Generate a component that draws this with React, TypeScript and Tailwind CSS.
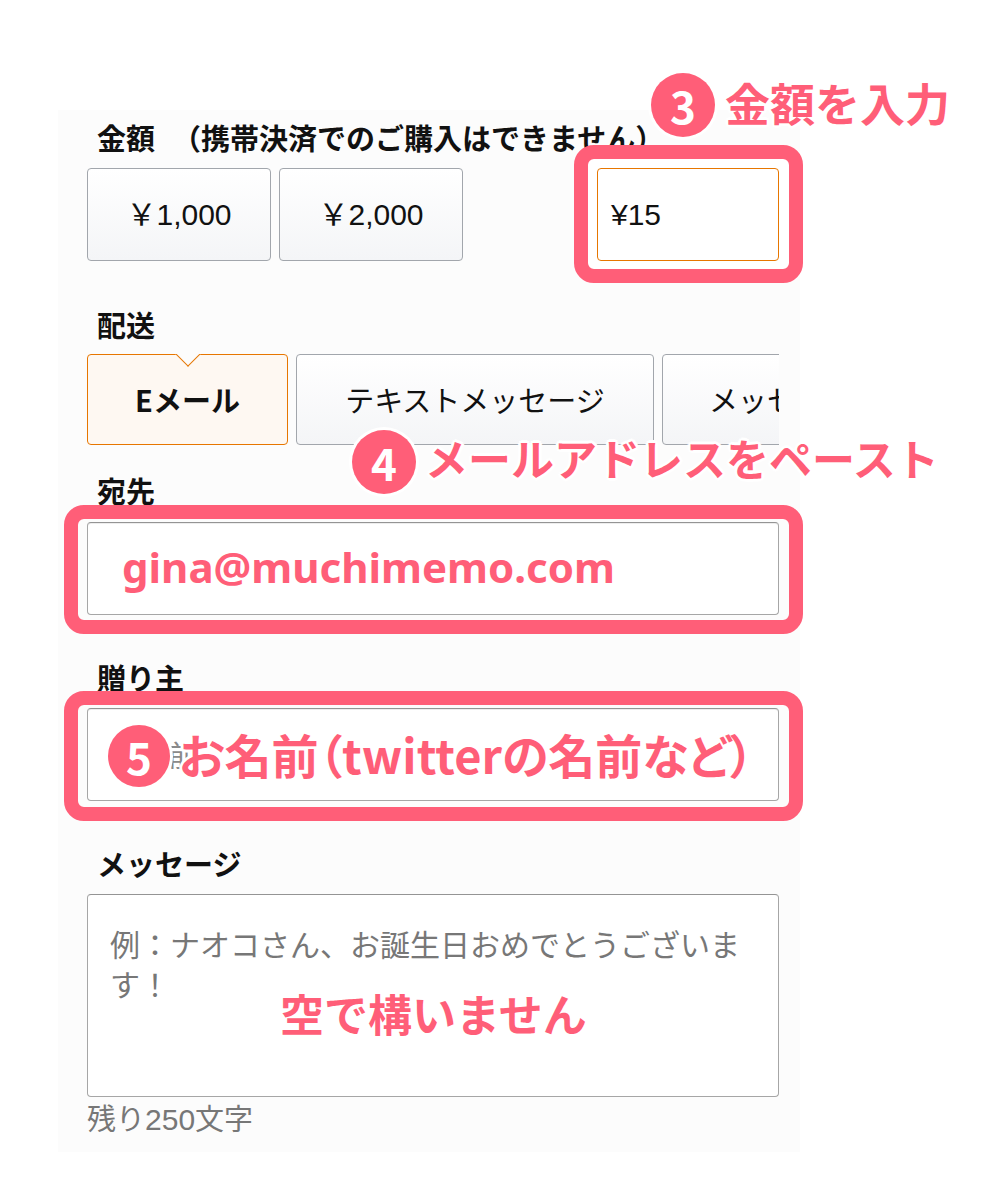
const PINK = 'text-[#ff5e78]';
const NUM_FONT = { fontFamily: '"Liberation Sans", "Noto Sans CJK JP", sans-serif' };

const Badge = ({ n, className }: { n: string; className: string }) => (
  <div
    className={`absolute flex items-center justify-center rounded-full bg-[#ff5e78] text-white font-bold text-[44px] leading-none shadow-[0_0_0_3px_#fff] ${className}`}
  >
    {n}
  </div>
);

const halo =
  '[text-shadow:3px_0_0_#fff,-3px_0_0_#fff,0_3px_0_#fff,0_-3px_0_#fff,2px_2px_0_#fff,-2px_-2px_0_#fff,2px_-2px_0_#fff,-2px_2px_0_#fff]';

const Label = ({ children, className = '' }: { children: React.ReactNode; className?: string }) => (
  <div className={`pl-[10px] text-[29px] leading-[35px] font-bold text-[#111] ${className}`}>{children}</div>
);

const PinkFrame = ({ className }: { className: string }) => (
  <div className={`absolute border-[14px] border-[#ff5e78] rounded-[20px] pointer-events-none ${className}`} />
);

const tabBase =
  'shrink-0 h-[91px] rounded-[4px] flex items-center justify-center whitespace-nowrap text-[29px] text-[#111]';

export default function App() {
  return (
    <div
      className="relative w-[1000px] h-[1200px] bg-white overflow-hidden"
      style={{ fontFamily: '"Noto Sans CJK JP", "Noto Sans", sans-serif' }}
    >
      <div className="ml-[58px] mt-[110px] w-[742px] bg-[#fcfcfc] pl-[29px] pt-[10px] pb-[15px]">
        <div className="w-[692px]">
          {/* 金額 */}
          <Label>
            金額<span className="ml-[17px]">（携帯決済でのご購入はできません）</span>
          </Label>
          <div className="mt-[13px] flex items-center gap-[8px]">
            <button
              className="w-[184px] h-[93px] rounded-[4px] border border-[#a2a6ac] bg-linear-to-b from-white to-[#f4f5f7] text-[30px] text-[#111]"
              style={NUM_FONT}
            >
              ￥1,000
            </button>
            <button
              className="w-[184px] h-[93px] rounded-[4px] border border-[#a2a6ac] bg-linear-to-b from-white to-[#f4f5f7] text-[30px] text-[#111]"
              style={NUM_FONT}
            >
              ￥2,000
            </button>
            <div className="relative ml-auto w-[182px] h-[93px]">
              <PinkFrame className="-left-[23px] -top-[23px] -right-[24px] -bottom-[22px] bg-white" />
              <div
                className="relative h-full rounded-[4px] border-[1.5px] border-[#e77600] bg-white flex items-center pl-[13px] text-[30px] text-[#111]"
                style={NUM_FONT}
              >
                ¥15
              </div>
            </div>
          </div>

          {/* 配送 */}
          <Label className="mt-[46px]">配送</Label>
          <div className="mt-[12px] flex gap-[8px] overflow-hidden">
            <div className={`${tabBase} relative w-[201px] border-[1.5px] border-[#e77600] bg-[#fef8f2] font-bold`}>
              Eメール
              <span className="absolute left-1/2 -top-[10px] -ml-[9px] w-[18px] h-[18px] rotate-45 bg-[#fcfcfc] border-r-[1.5px] border-b-[1.5px] border-[#e77600]" />
            </div>
            <div className={`${tabBase} w-[358px] border border-[#a2a6ac] bg-linear-to-b from-white to-[#f4f5f7]`}>
              テキストメッセージ
            </div>
            <div
              className={`${tabBase} w-[300px] justify-start pl-[46px] border border-[#a2a6ac] bg-linear-to-b from-white to-[#f4f5f7]`}
            >
              メッセージカード
            </div>
          </div>

          {/* 宛先 */}
          <Label className="mt-[28px]">宛先</Label>
          <div className="relative mt-[14px] h-[93px]">
            <PinkFrame className="-left-[23px] -top-[17px] -right-[24px] -bottom-[19px]" />
            <div className="h-full rounded-[4px] border border-[#a6a6a6] border-t-[#949494] bg-white shadow-[0_1px_0_rgba(0,0,0,0.07)_inset]" />
          </div>

          {/* 贈り主 */}
          <Label className="mt-[45px]">贈り主</Label>
          <div className="relative mt-[13px] h-[93px]">
            <PinkFrame className="-left-[23px] -top-[17px] -right-[24px] -bottom-[20px]" />
            <div className="h-full rounded-[4px] border border-[#a6a6a6] border-t-[#949494] bg-white flex items-center pl-[22px] text-[29px] text-[#8a8a8a] shadow-[0_1px_0_rgba(0,0,0,0.07)_inset]">
              お名前
            </div>
          </div>

          {/* メッセージ */}
          <Label className="mt-[45px]">メッセージ</Label>
          <div className="mt-[13px] h-[203px] rounded-[4px] border border-[#a6a6a6] border-t-[#949494] bg-white pl-[22px] pt-[28px] text-[30px] leading-[40px] text-[#777]">
            例：ナオコさん、お誕生日おめでとうございま
            <br />
            す！
          </div>
          <div className="mt-[3px] text-[29px] leading-[35px] text-[#777]">
            残り<span style={NUM_FONT} className="text-[30px]">250</span>文字
          </div>
        </div>
      </div>

      {/* annotations */}
      <Badge n="3" className="left-[651px] top-[73px] w-[64px] h-[64px]" />
      <div className={`absolute left-[725px] top-[80px] text-[45px] leading-none font-bold ${PINK} ${halo}`}>
        金額を入力
      </div>

      <Badge n="4" className="left-[352px] top-[430px] w-[64px] h-[64px]" />
      <div className={`absolute left-[425px] top-[436px] text-[43px] leading-none font-bold ${PINK} ${halo}`}>
        メールアドレスをペースト
      </div>

      <div
        className={`absolute left-[122px] top-[546px] text-[42px] leading-none font-bold ${PINK}`}
        style={{ fontFamily: '"Noto Sans", "Open Sans", sans-serif' }}
      >
        gina@muchimemo.com
      </div>

      <Badge n="5" className="left-[108px] top-[725px] w-[62px] h-[62px]" />
      <div
        className={`absolute left-[179px] top-[730px] text-[47px] leading-none font-bold ${PINK} ${halo} [font-feature-settings:'palt']`}
      >
        お名前（twitterの名前など）
      </div>

      <div className={`absolute left-[280px] top-[991px] text-[44px] leading-none font-bold ${PINK} ${halo}`}>
        空で構いません
      </div>
    </div>
  );
}
